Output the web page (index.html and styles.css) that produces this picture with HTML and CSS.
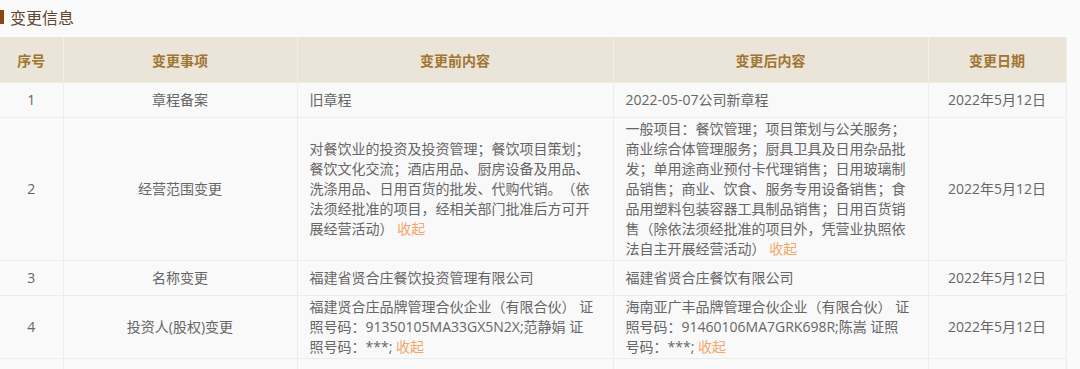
FILE: index.html
```html
<!DOCTYPE html>
<html lang="zh-CN">
<head>
<meta charset="utf-8">
<link rel="stylesheet" href="styles.css">
</head>
<body>
<div class="section">
  <h2 class="title">变更信息</h2>
  <table class="tbl">
    <colgroup>
      <col class="c1"><col class="c2"><col class="c3"><col class="c4"><col class="c5">
    </colgroup>
    <thead>
      <tr><th>序号</th><th>变更事项</th><th>变更前内容</th><th>变更后内容</th><th>变更日期</th></tr>
    </thead>
    <tbody>
      <tr>
        <td class="ctr">1</td><td class="ctr">章程备案</td><td>旧章程</td><td>2022-05-07公司新章程</td><td class="ctr">2022年5月12日</td>
      </tr>
      <tr>
        <td class="ctr">2</td><td class="ctr">经营范围变更</td>
        <td>对餐饮业的投资及投资管理；餐饮项目策划；餐饮文化交流；酒店用品、厨房设备及用品、洗涤用品、日用百货的批发、代购代销。（依法须经批准的项目，经相关部门批准后方可开展经营活动） <a class="fold">收起</a></td>
        <td>一般项目：餐饮管理；项目策划与公关服务；商业综合体管理服务；厨具卫具及日用杂品批发；单用途商业预付卡代理销售；日用玻璃制品销售；商业、饮食、服务专用设备销售；食品用塑料包装容器工具制品销售；日用百货销售（除依法须经批准的项目外，凭营业执照依法自主开展经营活动） <a class="fold">收起</a></td>
        <td class="ctr">2022年5月12日</td>
      </tr>
      <tr>
        <td class="ctr">3</td><td class="ctr">名称变更</td><td>福建省贤合庄餐饮投资管理有限公司</td><td>福建省贤合庄餐饮有限公司</td><td class="ctr">2022年5月12日</td>
      </tr>
      <tr>
        <td class="ctr">4</td><td class="ctr">投资人(股权)变更</td>
        <td>福建贤合庄品牌管理合伙企业（有限合伙） 证照号码：91350105MA33GX5N2X;范静娟 证照号码：***; <a class="fold">收起</a></td>
        <td>海南亚广丰品牌管理合伙企业（有限合伙） 证照号码：91460106MA7GRK698R;陈嵩 证照号码：***; <a class="fold">收起</a></td>
        <td class="ctr">2022年5月12日</td>
      </tr>
      <tr class="last">
        <td></td><td></td><td></td><td></td><td></td>
      </tr>
    </tbody>
  </table>
</div>
</body>
</html>
```

FILE: styles.css
```css
html, body {
  margin: 0;
  padding: 0;
  background: #fafafa;
  font-family: "Open Sans", "Noto Sans CJK SC", "Microsoft YaHei", sans-serif;
  text-spacing-trim: space-all;
}
.section {
  width: 1066px;
}
.title {
  margin: 0;
  height: 37px;
  display: flex;
  align-items: center;
  gap: 6px;
  padding-bottom: 3px;
  box-sizing: border-box;
  font-size: 16px;
  font-weight: normal;
  color: #5e4630;
}
.title::before {
  content: "";
  width: 4px;
  height: 14px;
  background: #8a4510;
}
.tbl {
  width: 1066px;
  border-collapse: collapse;
  table-layout: fixed;
  font-size: 14px;
  color: #666;
}
.c1 { width: 63px; }
.c2 { width: 234px; }
.c3 { width: 316px; }
.c4 { width: 315px; }
.c5 { width: 138px; }
.tbl th {
  background: #ebe4d9;
  color: #a07530;
  font-weight: bold;
  height: 45px;
  padding: 0;
  border: 1px solid #f2efea;
  border-top: none;
  text-align: center;
}
.tbl th:first-child, .tbl td:first-child { border-left: none; }
.tbl td {
  height: 35px;
  padding: 1px 18px 1px 12px;
  line-height: 20px;
  border: 1px solid #ececec;
  background: #f9f9f9;
  text-align: left;
  vertical-align: middle;
  box-sizing: border-box;
}
.tbl td.ctr {
  text-align: center;
  padding: 1px 12px;
}
.fold {
  color: #f7a56a;
  cursor: pointer;
}
.tbl tr.last td { height: 20px; }
```
